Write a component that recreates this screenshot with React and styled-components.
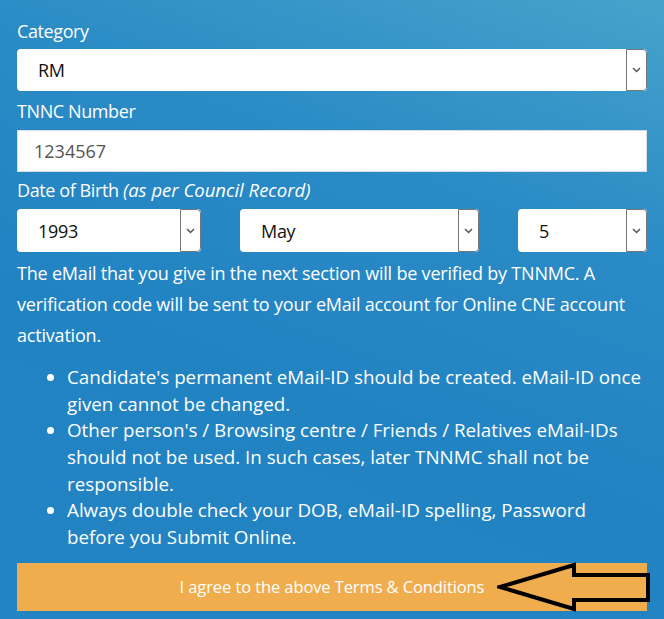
import React from 'react';
import styled, { createGlobalStyle } from 'styled-components';

const Global = createGlobalStyle`
  html, body {
    margin: 0;
    padding: 0;
  }
  body {
    font-family: "Open Sans", "DejaVu Sans", sans-serif;
    background: linear-gradient(200deg, #45a3cb 0%, #2b8bc5 30%, #2283c3 60%, #2383c3 100%);
    min-height: 619px;
    color: #fff;
  }
`;

const Page = styled.div`
  width: 664px;
  height: 619px;
  box-sizing: border-box;
  padding: 19px 17px 0 17px;
  overflow: hidden;
`;

const Label = styled.div`
  font-size: 18px;
  line-height: 24px;
  letter-spacing: -0.4px;
  margin-bottom: ${p => p.$mb || '6px'};
  em {
    font-style: italic;
    letter-spacing: 0;
    font-size: 18.5px;
  }
`;

const Field = styled.div`
  display: flex;
  align-items: stretch;
  width: ${p => p.$w || '630px'};
  height: ${p => p.$h || '42px'};
  box-sizing: border-box;
  background: #fff;
  border-radius: 4px;
  margin-bottom: ${p => p.$mb || '8px'};
  overflow: hidden;
`;

const Value = styled.div`
  flex: 1;
  display: flex;
  align-items: center;
  padding-left: 21px;
  font-size: 18px;
  color: #111;
  letter-spacing: -0.3px;
`;

const ArrowBox = styled.div`
  width: 21px;
  display: flex;
  align-items: center;
  justify-content: center;
  border: 1px solid #767676;
  border-radius: 0 4px 4px 0;
  box-sizing: border-box;
`;

const TextInput = styled.div`
  width: 630px;
  height: 42px;
  box-sizing: border-box;
  background: #fff;
  border: 1px solid #d8dde2;
  display: flex;
  align-items: center;
  padding-left: 16px;
  font-size: 18px;
  color: #555;
  margin-bottom: 6px;
`;

const Row = styled.div`
  display: flex;
  justify-content: space-between;
  margin-bottom: 6px;
`;

const Para = styled.p`
  margin: 0;
  font-size: 18px;
  line-height: 31px;
  letter-spacing: -0.2px;
`;

const List = styled.ul`
  margin: 13px 0 0 0;
  padding-left: 50px;
  font-size: 18.8px;
  line-height: 26.67px;
`;

const ButtonWrap = styled.div`
  position: relative;
  margin-top: 12px;
  width: 630px;
`;

const Button = styled.div`
  height: 48px;
  background: #f0ad4e;
  color: #fff;
  display: flex;
  align-items: center;
  justify-content: center;
  font-size: 16.5px;
  letter-spacing: -0.1px;
`;

// hand-drawn pointer arrow lying over the button
const ArrowSvg = styled.svg`
  position: absolute;
  left: 480px;
  top: -2px;
`;

const Chevron = () => (
  <svg width="9" height="6" viewBox="0 0 9 6">
    <path d="M1 1 L4.5 4.5 L8 1" fill="none" stroke="#555" strokeWidth="1.5" />
  </svg>
);

const Select = ({ value, w, h, mb }) => (
  <Field $w={w} $h={h} $mb={mb}>
    <Value>{value}</Value>
    <ArrowBox><Chevron /></ArrowBox>
  </Field>
);

export default function App() {
  return (
    <Page>
      <Global />
      <Label>Category</Label>
      <Select value="RM" />
      <Label $mb="7px">TNNC Number</Label>
      <TextInput>1234567</TextInput>
      <Label $mb="7px">Date of Birth <em>(as per Council Record)</em></Label>
      <Row>
        <Select value="1993" w="184px" h="43px" mb="0" />
        <Select value="May" w="239px" h="43px" mb="0" />
        <Select value="5" w="129px" h="43px" mb="0" />
      </Row>
      <Para>
        The eMail that you give in the next section will be verified by TNNMC. A
        verification code will be sent to your eMail account for Online CNE account
        activation.
      </Para>
      <List>
        <li>Candidate's permanent eMail-ID should be created. eMail-ID once given cannot be changed.</li>
        <li>Other person's / Browsing centre / Friends / Relatives eMail-IDs should not be used. In such cases, later TNNMC shall not be responsible.</li>
        <li>Always double check your DOB, eMail-ID spelling, Password before you Submit Online.</li>
      </List>
      <ButtonWrap>
        <Button>I agree to the above Terms &amp; Conditions</Button>
        <ArrowSvg width="160" height="52" viewBox="0 0 160 52">
          <polygon
            points="3,26 77,4 77,14 151,14 151,39 77,39 77,48"
            fill="none"
            stroke="#000"
            strokeWidth="4"
            strokeLinejoin="miter"
          />
        </ArrowSvg>
      </ButtonWrap>
    </Page>
  );
}
